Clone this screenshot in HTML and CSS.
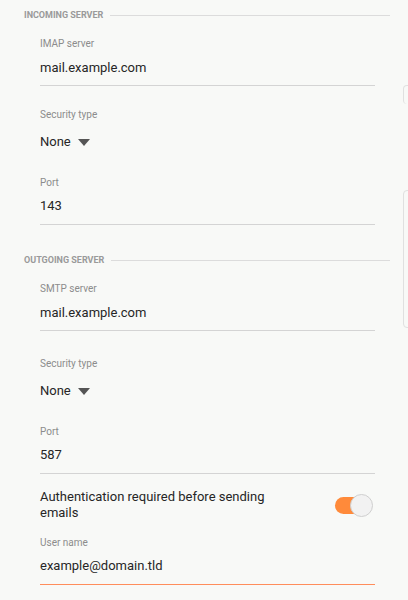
FILE: index.html
```html
<!DOCTYPE html>
<html lang="en">
<head>
    <meta charset="UTF-8">
    <meta name="viewport" content="width=device-width, initial-scale=1.0">
    <title>Server settings</title>
    <link rel="stylesheet" href="styles.css">
</head>
<body>
    <div class="settings">
        <div class="section-header">
            <span>Incoming server</span>
            <div class="rule"></div>
        </div>
        <div class="field underlined first">
            <div class="label">IMAP server</div>
            <div class="value">mail.example.com</div>
        </div>
        <div class="field spinner">
            <div class="label">Security type</div>
            <div class="value">None <span class="arrow"></span></div>
        </div>
        <div class="field underlined tight">
            <div class="label">Port</div>
            <div class="value">143</div>
        </div>

        <div class="section-header outgoing">
            <span>Outgoing server</span>
            <div class="rule"></div>
        </div>
        <div class="field underlined first">
            <div class="label">SMTP server</div>
            <div class="value">mail.example.com</div>
        </div>
        <div class="field spinner second">
            <div class="label">Security type</div>
            <div class="value">None <span class="arrow"></span></div>
        </div>
        <div class="field underlined tight">
            <div class="label">Port</div>
            <div class="value">587</div>
        </div>

        <div class="switch-row">
            <div class="switch-text">Authentication required before sending emails</div>
            <div class="switch on"><div class="knob"></div></div>
        </div>
        <div class="field underlined focused">
            <div class="label">User name</div>
            <div class="value">example@domain.tld</div>
        </div>
    </div>

    <div class="edge edge-top"></div>
    <div class="edge edge-mid"></div>
</body>
</html>
```

FILE: styles.css
```css
body {
    margin: 0;
    background-color: #f8f9f7;
    font-family: Roboto, "Liberation Sans", sans-serif;
    overflow: hidden;
}

.settings {
    padding-top: 7px;
}

.section-header {
    display: flex;
    align-items: center;
    gap: 7px;
    height: 16px;
    padding: 0 18px 0 24px;
    font-size: 9px;
    font-weight: bold;
    text-transform: uppercase;
    color: #9a9a9a;
}

.section-header.outgoing {
    margin-top: 27px;
}

.section-header .rule {
    flex: 1;
    height: 1px;
    background-color: #dcdcdc;
}

.field {
    margin: 21px 33px 0 40px;
}

.field.first {
    margin-top: 13px;
}

.field.second {
    margin-top: 25px;
}

.label {
    font-size: 10px;
    line-height: 16px;
    color: #8c8c8c;
}

.value {
    margin-top: 3px;
    font-size: 13px;
    line-height: 24px;
    color: #262626;
}

.field.first .value {
    margin-top: 4px;
}

.field.underlined {
    padding-bottom: 6px;
    border-bottom: 1px solid #d4d4d4;
}

.field.first.underlined {
    padding-bottom: 5px;
}

.field.spinner .value {
    margin-top: 7px;
    display: flex;
    align-items: center;
    gap: 7px;
}

.arrow {
    width: 0;
    height: 0;
    border-left: 6.5px solid transparent;
    border-right: 6.5px solid transparent;
    border-top: 7px solid #555;
}

.field.focused {
    margin-top: 14px;
    border-bottom-color: #ff8d5c;
}

.switch-row {
    display: flex;
    align-items: center;
    justify-content: space-between;
    margin: 15px 38px 0 40px;
}

.switch-text {
    width: 240px;
    font-size: 13px;
    line-height: 16px;
    color: #262626;
}

.switch {
    position: relative;
    width: 35px;
    height: 17px;
    border-radius: 9px;
    background-color: #ff8a3a;
}

.knob {
    position: absolute;
    right: -3px;
    top: -3px;
    width: 21px;
    height: 21px;
    border-radius: 50%;
    background-color: #f2f2f2;
    border: 1px solid #cfcfcf;
}

.edge {
    position: absolute;
    left: 403px;
    width: 20px;
    border: 1px solid #e0e0e0;
    border-radius: 4px;
}

.edge-top {
    top: 85px;
    height: 18px;
    border-bottom: none;
}

.edge-mid {
    top: 190px;
    height: 136px;
}
```
